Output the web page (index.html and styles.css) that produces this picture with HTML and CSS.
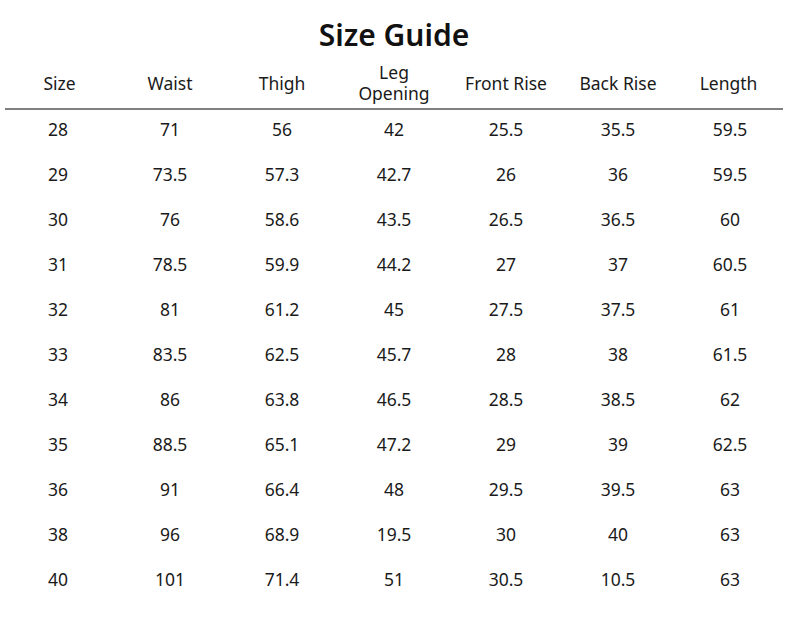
FILE: index.html
```html
<!DOCTYPE html>
<html>
<head>
<meta charset="utf-8">
<link rel="stylesheet" href="styles.css">
</head>
<body>
<div class="guide">
  <h1 class="title">Size Guide</h1>
  <div class="row head">
    <div class="cell">Size</div>
    <div class="cell">Waist</div>
    <div class="cell">Thigh</div>
    <div class="cell">Leg<br>Opening</div>
    <div class="cell">Front Rise</div>
    <div class="cell">Back Rise</div>
    <div class="cell">Length</div>
  </div>
  <div class="row"><div class="cell">28</div><div class="cell">71</div><div class="cell">56</div><div class="cell">42</div><div class="cell">25.5</div><div class="cell">35.5</div><div class="cell">59.5</div></div>
  <div class="row"><div class="cell">29</div><div class="cell">73.5</div><div class="cell">57.3</div><div class="cell">42.7</div><div class="cell">26</div><div class="cell">36</div><div class="cell">59.5</div></div>
  <div class="row"><div class="cell">30</div><div class="cell">76</div><div class="cell">58.6</div><div class="cell">43.5</div><div class="cell">26.5</div><div class="cell">36.5</div><div class="cell">60</div></div>
  <div class="row"><div class="cell">31</div><div class="cell">78.5</div><div class="cell">59.9</div><div class="cell">44.2</div><div class="cell">27</div><div class="cell">37</div><div class="cell">60.5</div></div>
  <div class="row"><div class="cell">32</div><div class="cell">81</div><div class="cell">61.2</div><div class="cell">45</div><div class="cell">27.5</div><div class="cell">37.5</div><div class="cell">61</div></div>
  <div class="row"><div class="cell">33</div><div class="cell">83.5</div><div class="cell">62.5</div><div class="cell">45.7</div><div class="cell">28</div><div class="cell">38</div><div class="cell">61.5</div></div>
  <div class="row"><div class="cell">34</div><div class="cell">86</div><div class="cell">63.8</div><div class="cell">46.5</div><div class="cell">28.5</div><div class="cell">38.5</div><div class="cell">62</div></div>
  <div class="row"><div class="cell">35</div><div class="cell">88.5</div><div class="cell">65.1</div><div class="cell">47.2</div><div class="cell">29</div><div class="cell">39</div><div class="cell">62.5</div></div>
  <div class="row"><div class="cell">36</div><div class="cell">91</div><div class="cell">66.4</div><div class="cell">48</div><div class="cell">29.5</div><div class="cell">39.5</div><div class="cell">63</div></div>
  <div class="row"><div class="cell">38</div><div class="cell">96</div><div class="cell">68.9</div><div class="cell">19.5</div><div class="cell">30</div><div class="cell">40</div><div class="cell">63</div></div>
  <div class="row"><div class="cell">40</div><div class="cell">101</div><div class="cell">71.4</div><div class="cell">51</div><div class="cell">30.5</div><div class="cell">10.5</div><div class="cell">63</div></div>
</div>
</body>
</html>
```
FILE: styles.css
```css
html, body {
  margin: 0;
  padding: 0;
  background: #fff;
}
body {
  font-family: "Noto Sans", "Open Sans", sans-serif;
  color: #1a1a1a;
}
.guide {
  width: 784px;
  margin-left: 2px;
}
.title {
  margin: 0;
  padding-top: 10px;
  height: 60px;
  box-sizing: border-box;
  line-height: 50px;
  font-size: 30px;
  font-weight: 600;
  text-align: center;
  color: #111;
}
.row {
  display: grid;
  grid-template-columns: repeat(7, 112px);
  height: 45px;
  box-sizing: border-box;
  padding-top: 7px;
  font-size: 17.5px;
  line-height: 24px;
}
.cell {
  text-align: center;
}
.row.head {
  height: 50px;
  padding: 0 0 2px;
  align-items: center;
  line-height: 21px;
  border-bottom: 2px solid #808080;
  margin: 0 3px;
  grid-template-columns: 109px 112px 112px 112px 112px 112px 109px;
}
```
